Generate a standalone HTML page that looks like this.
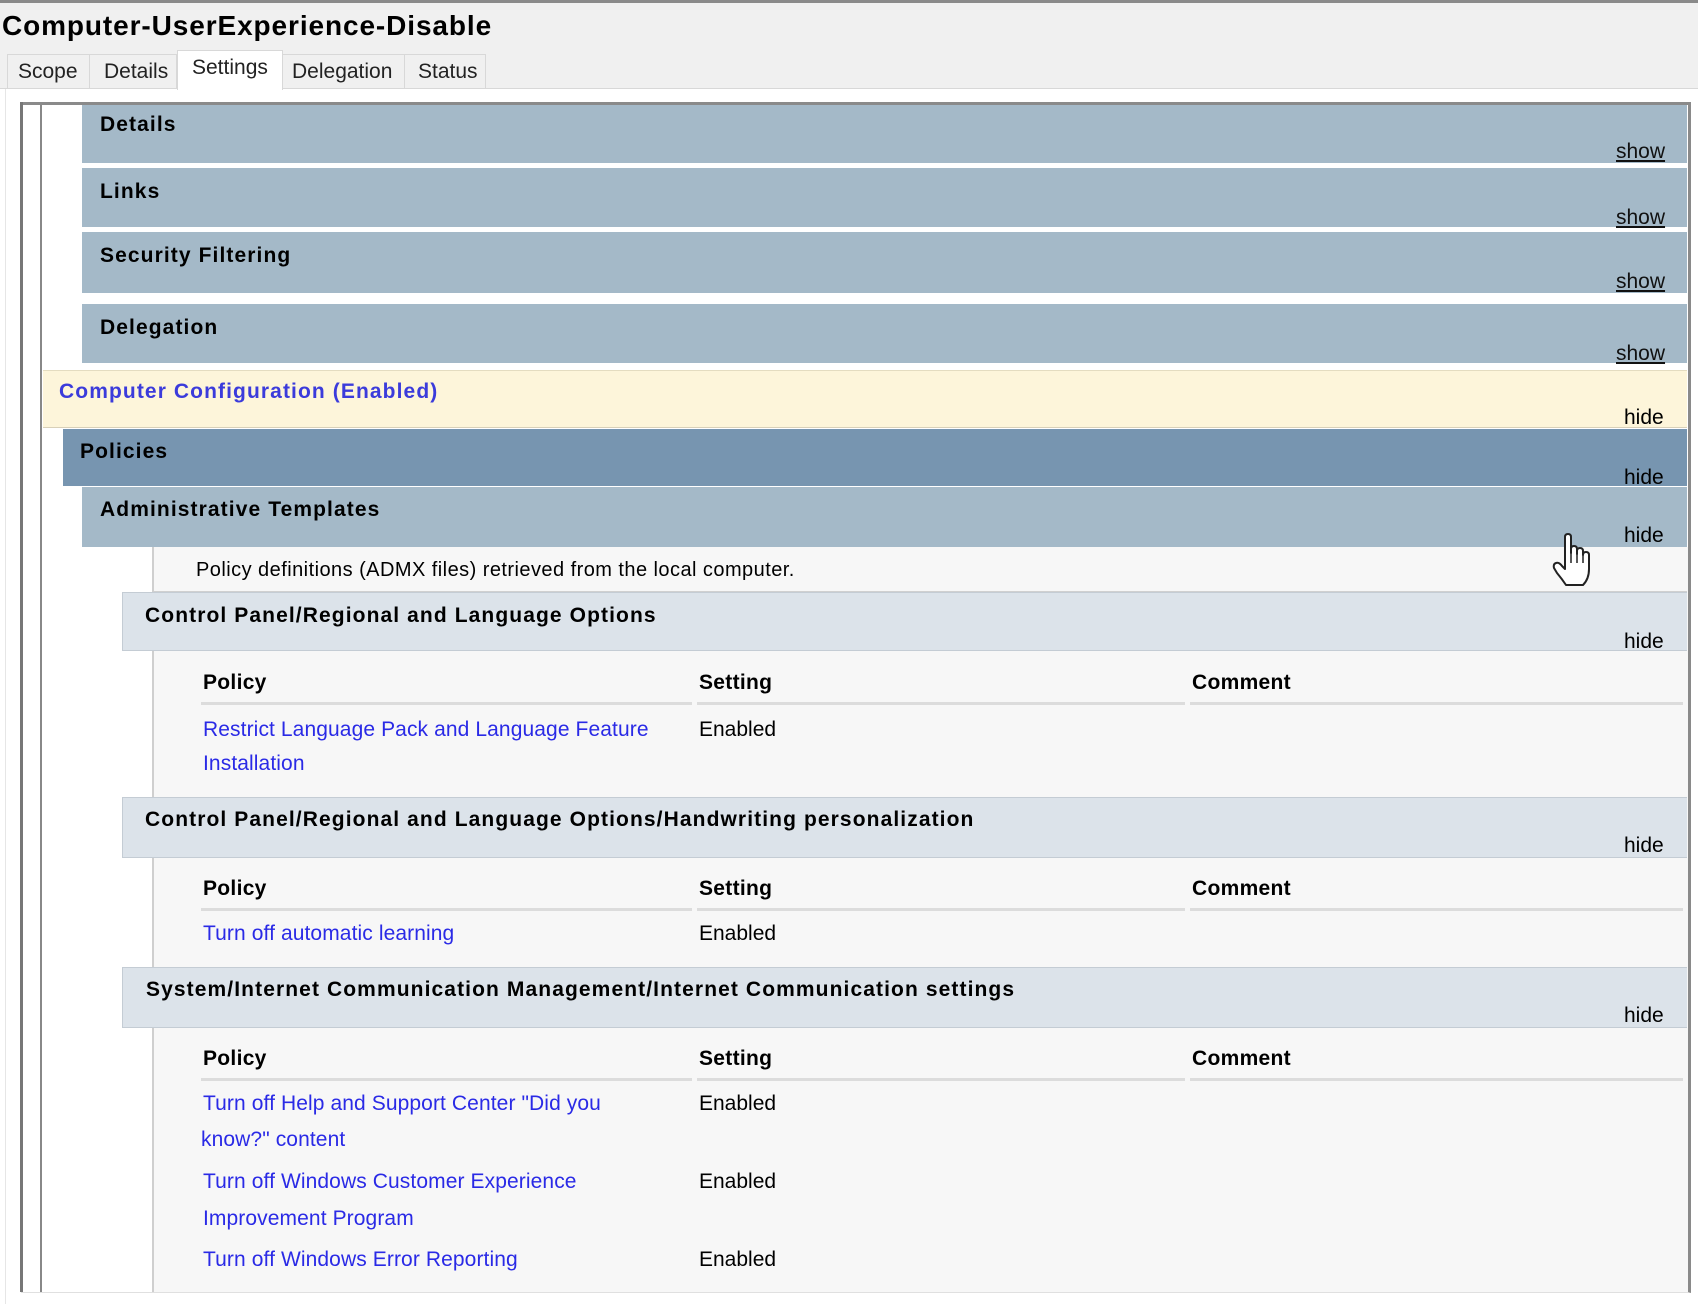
<!DOCTYPE html>
<html><head><meta charset="utf-8"><style>
*{margin:0;padding:0;box-sizing:border-box}
body{width:1698px;height:1304px;background:#fff;font-family:"Liberation Sans",sans-serif;position:relative;overflow:hidden;color:#000}
.a{position:absolute}
.t{position:absolute;height:26px;line-height:26px;font-size:21px;white-space:nowrap}
.b{font-weight:bold;letter-spacing:1.1px}
.c{letter-spacing:0.1px}
.lk{color:#2a2ae6}
.ul{position:absolute;height:3px;background:#dcdcdc}
.sh{text-decoration:underline;color:#111}
</style></head><body>
<div class="a" style="left:0;top:0;width:1698px;height:89px;background:#f0f0f0"></div>
<div class="a" style="left:0;top:0;width:1698px;height:3px;background:#8a8a8a"></div>
<div class="t" style="left:2px;top:11px;font-size:28px;height:30px;line-height:30px;font-weight:bold;letter-spacing:0.9px">Computer-UserExperience-Disable</div>
<!-- tabs -->
<div class="a" style="left:7px;top:54px;width:83px;height:35px;border:1px solid #d8d8d8;border-bottom:none;background:#f0f0f0"></div>
<div class="a" style="left:90px;top:54px;width:87px;height:35px;border:1px solid #d8d8d8;border-bottom:none;border-left:none;background:#f0f0f0"></div>
<div class="a" style="left:177px;top:50px;width:106px;height:40px;border:1px solid #d8d8d8;border-bottom:none;background:#fff"></div>
<div class="a" style="left:283px;top:54px;width:122px;height:35px;border:1px solid #d8d8d8;border-bottom:none;border-left:none;background:#f0f0f0"></div>
<div class="a" style="left:405px;top:54px;width:81px;height:35px;border:1px solid #d8d8d8;border-bottom:none;border-left:none;background:#f0f0f0"></div>
<div class="t" style="left:18px;top:59px;color:#222">Scope</div>
<div class="t" style="left:104px;top:59px;color:#222">Details</div>
<div class="t" style="left:192px;top:55px;color:#222">Settings</div>
<div class="t" style="left:292px;top:59px;color:#222">Delegation</div>
<div class="t" style="left:418px;top:59px;color:#222">Status</div>
<div class="a" style="left:0;top:88px;width:177px;height:1px;background:#d8d8d8"></div>
<div class="a" style="left:283px;top:88px;width:1415px;height:1px;background:#d8d8d8"></div>
<div class="a" style="left:5px;top:89px;width:1px;height:1215px;background:#e6e6e6"></div>
<!-- content box -->
<div class="a" style="left:21px;top:102px;width:1670px;height:1191px;border-top:3px solid #8a8a8a;border-right:3px solid #8a8a8a;border-bottom:1px solid #e0e0e0"></div>
<div class="a" style="left:20px;top:102px;width:3px;height:1190px;background:#777"></div>
<div class="a" style="left:40px;top:105px;width:2px;height:1187px;background:#888"></div>
<div class="a" style="left:153px;top:547px;width:1535px;height:745px;background:#f7f7f7"></div>
<div class="a" style="left:152px;top:547px;width:2px;height:745px;background:#cfcfcf"></div>
<!-- bars -->
<div class="a" style="left:82px;top:105px;width:1605px;height:58px;background:#a4b9c8"></div>
<div class="a" style="left:82px;top:168px;width:1605px;height:59px;background:#a4b9c8"></div>
<div class="a" style="left:82px;top:232px;width:1605px;height:61px;background:#a4b9c8"></div>
<div class="a" style="left:82px;top:304px;width:1605px;height:59px;background:#a4b9c8"></div>
<div class="a" style="left:43px;top:370px;width:1644px;height:58px;background:#fdf5da;border-top:1px solid #e4dcc0;border-bottom:1px solid #d8d0b8"></div>
<div class="a" style="left:63px;top:429px;width:1624px;height:57px;background:#7795b0"></div>
<div class="a" style="left:82px;top:487px;width:1605px;height:60px;background:#a4b9c8"></div>
<div class="a" style="left:122px;top:592px;width:1565px;height:59px;background:#dce3ea;border:1px solid #c4ccd4;border-right:none"></div>
<div class="a" style="left:122px;top:797px;width:1565px;height:61px;background:#dce3ea;border:1px solid #c4ccd4;border-right:none"></div>
<div class="a" style="left:122px;top:967px;width:1565px;height:61px;background:#dce3ea;border:1px solid #c4ccd4;border-right:none"></div>
<div class="a" style="left:154px;top:591px;width:1533px;height:1px;background:#d0d0d0"></div>

<div class="t b" style="left:100px;top:112px">Details</div>
<div class="t b" style="left:100px;top:179px">Links</div>
<div class="t b" style="left:100px;top:243px">Security Filtering</div>
<div class="t b" style="left:100px;top:315px">Delegation</div>
<div class="t b" style="left:59px;top:379px;color:#3b3bdb">Computer Configuration (Enabled)</div>
<div class="t b" style="left:80px;top:439px">Policies</div>
<div class="t b" style="left:100px;top:497px">Administrative Templates</div>
<div class="t" style="left:196px;top:557px;font-size:20px;letter-spacing:0.45px">Policy definitions (ADMX files) retrieved from the local computer.</div>
<div class="t b" style="left:145px;top:603px">Control Panel/Regional and Language Options</div>
<div class="t b" style="left:145px;top:807px">Control Panel/Regional and Language Options/Handwriting personalization</div>
<div class="t b" style="left:146px;top:977px">System/Internet Communication Management/Internet Communication settings</div>

<div class="t sh" style="left:1616px;top:139px">show</div>
<div class="t sh" style="left:1616px;top:205px">show</div>
<div class="t sh" style="left:1616px;top:269px">show</div>
<div class="t sh" style="left:1616px;top:341px">show</div>
<div class="t" style="left:1624px;top:405px">hide</div>
<div class="t" style="left:1624px;top:465px">hide</div>
<div class="t" style="left:1624px;top:523px">hide</div>
<div class="t" style="left:1624px;top:629px">hide</div>
<div class="t" style="left:1624px;top:833px">hide</div>
<div class="t" style="left:1624px;top:1003px">hide</div>

<!-- tables -->
<div class="t b" style="left:203px;top:670px;letter-spacing:0.3px">Policy</div>
<div class="t b" style="left:699px;top:670px;letter-spacing:0.3px">Setting</div>
<div class="t b" style="left:1192px;top:670px;letter-spacing:0.3px">Comment</div>
<div class="ul" style="left:201px;top:702px;width:491px"></div>
<div class="ul" style="left:697px;top:702px;width:488px"></div>
<div class="ul" style="left:1190px;top:702px;width:493px"></div>
<div class="t lk c" style="left:203px;top:717px">Restrict Language Pack and Language Feature</div>
<div class="t lk c" style="left:203px;top:751px">Installation</div>
<div class="t" style="left:699px;top:717px">Enabled</div>

<div class="t b" style="left:203px;top:876px;letter-spacing:0.3px">Policy</div>
<div class="t b" style="left:699px;top:876px;letter-spacing:0.3px">Setting</div>
<div class="t b" style="left:1192px;top:876px;letter-spacing:0.3px">Comment</div>
<div class="ul" style="left:201px;top:908px;width:491px"></div>
<div class="ul" style="left:697px;top:908px;width:488px"></div>
<div class="ul" style="left:1190px;top:908px;width:493px"></div>
<div class="t lk c" style="left:203px;top:921px">Turn off automatic learning</div>
<div class="t" style="left:699px;top:921px">Enabled</div>

<div class="t b" style="left:203px;top:1046px;letter-spacing:0.3px">Policy</div>
<div class="t b" style="left:699px;top:1046px;letter-spacing:0.3px">Setting</div>
<div class="t b" style="left:1192px;top:1046px;letter-spacing:0.3px">Comment</div>
<div class="ul" style="left:201px;top:1078px;width:491px"></div>
<div class="ul" style="left:697px;top:1078px;width:488px"></div>
<div class="ul" style="left:1190px;top:1078px;width:493px"></div>
<div class="t lk c" style="left:203px;top:1091px">Turn off Help and Support Center "Did you</div>
<div class="t lk c" style="left:201px;top:1127px">know?" content</div>
<div class="t" style="left:699px;top:1091px">Enabled</div>
<div class="t lk c" style="left:203px;top:1169px">Turn off Windows Customer Experience</div>
<div class="t lk c" style="left:203px;top:1206px">Improvement Program</div>
<div class="t" style="left:699px;top:1169px">Enabled</div>
<div class="t lk c" style="left:203px;top:1247px">Turn off Windows Error Reporting</div>
<div class="t" style="left:699px;top:1247px">Enabled</div>

<!-- cursor -->
<svg class="a" style="left:1552px;top:533px" width="40" height="56" viewBox="0 0 40 56">
<path d="M13 4 Q13 1 16 1 Q19 1 19 4 L19 20 L19 16 Q19 13 22 13 Q25 13 25 16 L25 21 L25 18 Q25 15 28 15 Q31 15 31 18 L31 22 Q31 19 34 19 Q37 19 37 22 L37 36 Q37 46 31 52 L14 52 Q10 46 5 40 L2 35 Q1 31 4 30 Q7 29 10 33 L13 36 Z" fill="#fff" stroke="#222" stroke-width="2" stroke-linejoin="round"/>
<path d="M19 20 L19 30 M25 21 L25 30 M31 22 L31 30" stroke="#222" stroke-width="1.5"/>
</svg>
</body></html>
